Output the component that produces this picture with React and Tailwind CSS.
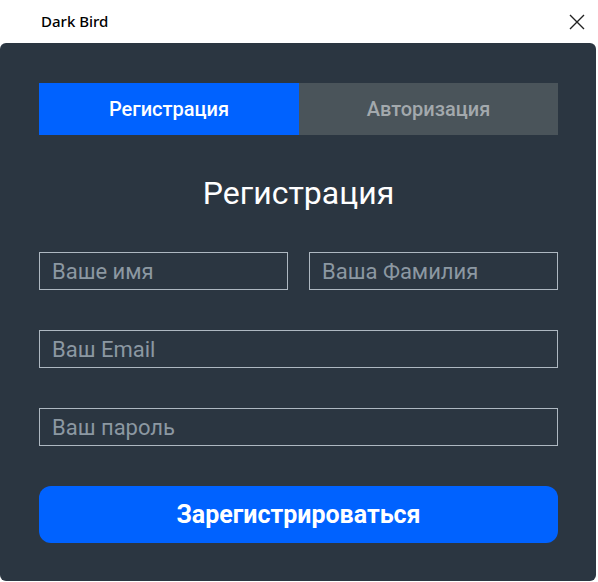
import { useState } from "react";

function Field({ placeholder, className = "" }) {
    return (
        <input
            type="text"
            placeholder={placeholder}
            className={`h-[38px] border border-[#aeb8c1] bg-transparent px-3 text-[22px] text-white placeholder:text-[#8c98a2] outline-none ${className}`}
        />
    );
}

export default function App() {
    const [tab, setTab] = useState("register");

    return (
        <div className="w-[598px] h-[582px] bg-white flex flex-col font-['Roboto',sans-serif]">
            <div className="h-[43px] flex items-center justify-between pl-[41px] pr-[13px]">
                <span className="text-[15px] font-medium text-black font-['Noto_Sans',sans-serif]">Dark Bird</span>
                <svg width="16" height="16" viewBox="0 0 16 16" stroke="#222" strokeWidth="1.4" fill="none">
                    <path d="M1 1L15 15M15 1L1 15" />
                </svg>
            </div>

            <div className="flex-1 mr-[2px] mb-[1px] rounded-[6px] bg-[#2b3641] pl-[39px] pr-[38px] pt-[40px]">
                <div className="flex h-[52px]">
                    <button
                        onClick={() => setTab("register")}
                        className={`w-[260px] text-[20px] font-medium ${tab === "register" ? "bg-[#0062ff] text-white" : "bg-[#4a545a] text-[#a3a9ad]"}`}
                    >
                        Регистрация
                    </button>
                    <button
                        onClick={() => setTab("login")}
                        className={`flex-1 text-[20px] font-medium ${tab === "login" ? "bg-[#0062ff] text-white" : "bg-[#4a545a] text-[#a3a9ad]"}`}
                    >
                        Авторизация
                    </button>
                </div>

                <h1 className="mt-[37px] text-center text-[32px] leading-[42px] text-white">Регистрация</h1>

                <div className="mt-[38px] flex gap-[21px]">
                    <Field placeholder="Ваше имя" className="w-[249px]" />
                    <Field placeholder="Ваша Фамилия" className="flex-1 min-w-0" />
                </div>
                <Field placeholder="Ваш Email" className="mt-[40px] w-full" />
                <Field placeholder="Ваш пароль" className="mt-[40px] w-full" />

                <button className="mt-[40px] w-full h-[57px] rounded-[12px] bg-[#0062ff] text-[25px] font-bold text-white">
                    Зарегистрироваться
                </button>
            </div>
        </div>
    );
}
